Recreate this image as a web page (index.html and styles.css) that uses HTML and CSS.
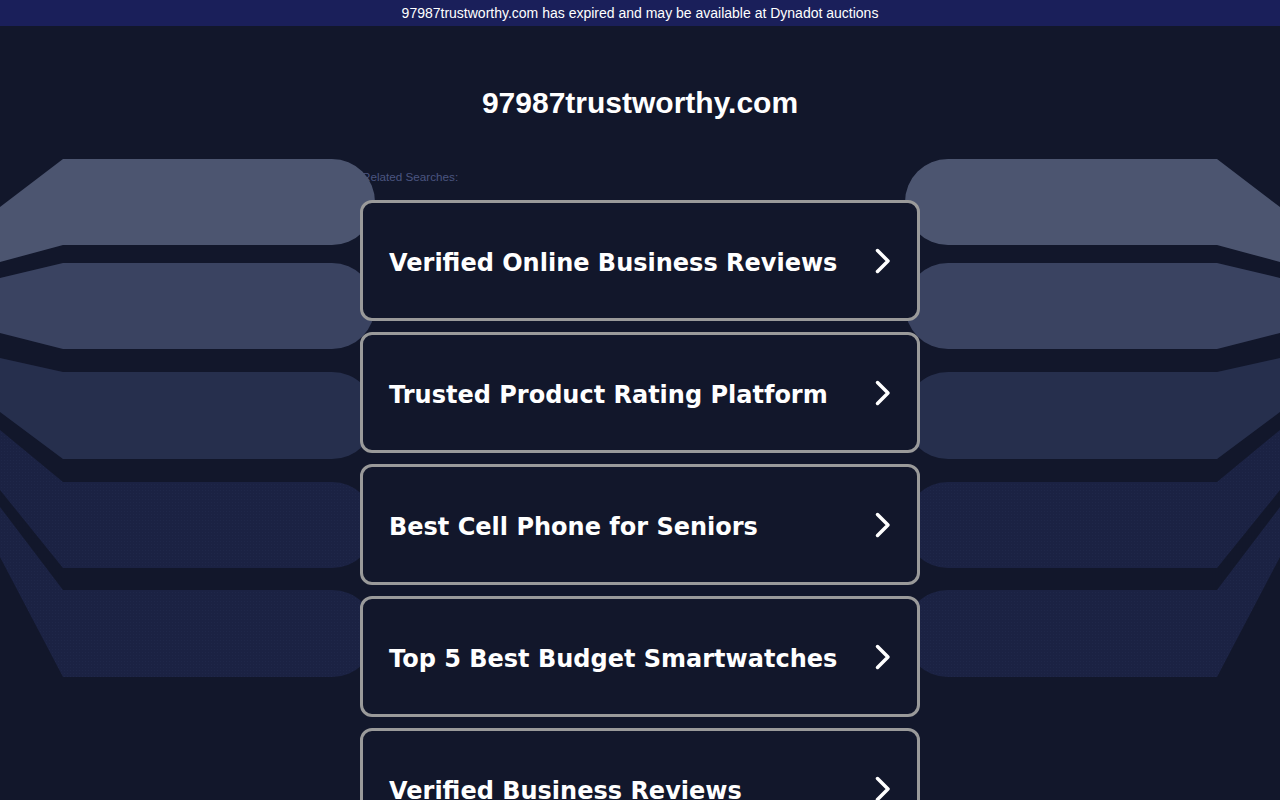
FILE: index.html
```html
<!DOCTYPE html>
<html lang="en">
<head>
<meta charset="utf-8">
<title>97987trustworthy.com</title>
<link rel="stylesheet" href="styles.css">
</head>
<body>
<div class="topbar">97987trustworthy.com has expired and may be available at Dynadot auctions</div>

<svg class="backdrop" width="1280" height="800" viewBox="0 0 1280 800" aria-hidden="true">
  <defs>
    <pattern id="dots" width="3" height="3" patternUnits="userSpaceOnUse">
      <rect width="3" height="3" fill="#1b2243"/>
      <rect x="1" y="1" width="1" height="1" fill="#1f2749"/>
    </pattern>
    <g id="bands">
      <path d="M0,207 L63,159 L332,159 A43,43 0 0 1 332,245 L63,245 L0,262 Z" fill="#4c5570"/>
      <path d="M0,278 L63,263 L332,263 A43,43 0 0 1 332,349 L63,349 L0,333 Z" fill="#3a4361"/>
      <path d="M0,358 L63,372 L332,372 A43.5,43.5 0 0 1 332,459 L63,459 L0,412 Z" fill="#262f4d"/>
      <path d="M0,430 L63,482 L332,482 A43,43 0 0 1 332,568 L63,568 L0,490 Z" fill="url(#dots)"/>
      <path d="M0,507 L63,590 L332,590 A43.5,43.5 0 0 1 332,677 L63,677 L0,557 Z" fill="url(#dots)"/>
    </g>
  </defs>
  <use href="#bands"/>
  <use href="#bands" transform="translate(1280,0) scale(-1,1)"/>
</svg>

<main class="page">
  <h1 class="domain">97987trustworthy.com</h1>
  <div class="related">Related Searches:</div>
  <ul class="links">
    <li class="card"><span class="card-text">Verified Online Business Reviews</span><svg class="chev" viewBox="0 0 16 26" width="16" height="26"><polyline points="2.5,2.5 13,13 2.5,23.5"/></svg></li>
    <li class="card"><span class="card-text">Trusted Product Rating Platform</span><svg class="chev" viewBox="0 0 16 26" width="16" height="26"><polyline points="2.5,2.5 13,13 2.5,23.5"/></svg></li>
    <li class="card"><span class="card-text">Best Cell Phone for Seniors</span><svg class="chev" viewBox="0 0 16 26" width="16" height="26"><polyline points="2.5,2.5 13,13 2.5,23.5"/></svg></li>
    <li class="card"><span class="card-text">Top 5 Best Budget Smartwatches</span><svg class="chev" viewBox="0 0 16 26" width="16" height="26"><polyline points="2.5,2.5 13,13 2.5,23.5"/></svg></li>
    <li class="card"><span class="card-text">Verified Business Reviews</span><svg class="chev" viewBox="0 0 16 26" width="16" height="26"><polyline points="2.5,2.5 13,13 2.5,23.5"/></svg></li>
  </ul>
</main>
</body>
</html>
```

FILE: styles.css
```css
html, body {
  margin: 0;
  padding: 0;
}
body {
  background: #12172b;
  font-family: "Liberation Sans", Arial, sans-serif;
  color: #fff;
  height: 800px;
  overflow: hidden;
  position: relative;
}
.topbar {
  height: 26px;
  line-height: 26px;
  background: #1a1f5a;
  color: #fff;
  text-align: center;
  font-size: 14px;
}
.backdrop {
  position: absolute;
  left: 0;
  top: 0;
  pointer-events: none;
}
.page {
  width: 560px;
  margin: 0 auto;
}
.domain {
  margin: 59px 0 0;
  font-size: 30px;
  line-height: 36px;
  font-weight: bold;
  text-align: center;
  color: #fff;
}
.related {
  margin: 49px 0 0 2px;
  font-size: 11.7px;
  line-height: 14px;
  color: #4b5580;
}
.links {
  list-style: none;
  margin: 16px 0 0;
  padding: 0;
  display: flex;
  flex-direction: column;
  gap: 11px;
}
.card {
  position: relative;
  z-index: 1;
  box-sizing: border-box;
  height: 121px;
  border: 3px solid #9a9a9a;
  border-radius: 12px;
  background: #12172b;
  display: flex;
  align-items: center;
  justify-content: space-between;
  padding: 0 26px 0 26px;
}
.card-text {
  font-family: "DejaVu Sans", Verdana, sans-serif;
  font-weight: bold;
  font-size: 24px;
  padding-top: 4px;
  color: #fff;
}
.chev {
  display: block;
  fill: none;
  stroke: #fff;
  stroke-width: 3.5;
  stroke-linecap: round;
  stroke-linejoin: round;
}
```
